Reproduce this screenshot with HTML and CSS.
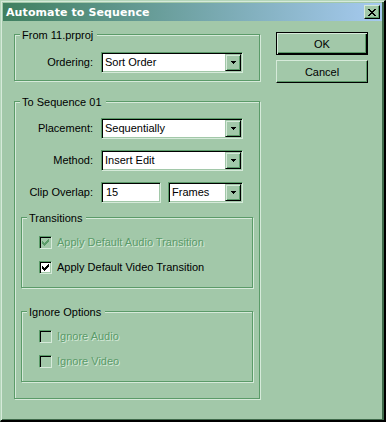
FILE: index.html
```html
<!DOCTYPE html>
<html lang="en">
<head>
  <meta charset="UTF-8" />
  <title>Automate to Sequence</title>
  <link rel="stylesheet" href="styles.css">
</head>
<body>
  <div class="window">
    <!-- заголовок окна -->
    <div class="titlebar">
      <span class="title">Automate to Sequence</span>
      <span class="close-btn">
        <svg width="8" height="7" viewBox="0 0 8 7" shape-rendering="crispEdges">
          <path d="M0 0h2v1h-2z M6 0h2v1h-2z M1 1h2v1h-2z M5 1h2v1h-2z M2 2h4v1h-4z M3 3h2v1h-2z M2 4h4v1h-4z M1 5h2v1h-2z M5 5h2v1h-2z M0 6h2v1h-2z M6 6h2v1h-2z" fill="#000"/>
        </svg>
      </span>
    </div>

    <div class="dialog">
      <div class="main-col">
        <div class="group group-from">
          <span class="group-title">From 11.prproj</span>
          <div class="field-row">
            <span class="field-label">Ordering:</span>
            <div class="combo">
              <span class="combo-text">Sort Order</span>
              <span class="combo-btn"><svg width="5" height="3" viewBox="0 0 5 3" shape-rendering="crispEdges"><path d="M0 0h5v1h-1v1h-1v1h-1v-1h-1v-1h-1z" fill="#000"/></svg></span>
            </div>
          </div>
        </div>

        <div class="group group-seq">
          <span class="group-title">To Sequence 01</span>
          <div class="rows">
            <div class="field-row">
              <span class="field-label">Placement:</span>
              <div class="combo">
                <span class="combo-text">Sequentially</span>
                <span class="combo-btn"><svg width="5" height="3" viewBox="0 0 5 3" shape-rendering="crispEdges"><path d="M0 0h5v1h-1v1h-1v1h-1v-1h-1v-1h-1z" fill="#000"/></svg></span>
              </div>
            </div>
            <div class="field-row">
              <span class="field-label">Method:</span>
              <div class="combo">
                <span class="combo-text">Insert Edit</span>
                <span class="combo-btn"><svg width="5" height="3" viewBox="0 0 5 3" shape-rendering="crispEdges"><path d="M0 0h5v1h-1v1h-1v1h-1v-1h-1v-1h-1z" fill="#000"/></svg></span>
              </div>
            </div>
            <div class="field-row">
              <span class="field-label">Clip Overlap:</span>
              <div class="textbox">15</div>
              <div class="combo combo-small">
                <span class="combo-text">Frames</span>
                <span class="combo-btn"><svg width="5" height="3" viewBox="0 0 5 3" shape-rendering="crispEdges"><path d="M0 0h5v1h-1v1h-1v1h-1v-1h-1v-1h-1z" fill="#000"/></svg></span>
              </div>
            </div>
          </div>

          <div class="group group-inner">
            <span class="group-title">Transitions</span>
            <div class="check-row disabled">
              <span class="checkbox"><svg width="7" height="7" viewBox="0 0 7 7" shape-rendering="crispEdges"><path d="M6 0h1v1h-1z M5 1h2v1h-2z M0 2h1v1h-1z M4 2h3v1h-3z M0 3h2v1h-2z M3 3h3v1h-3z M0 4h5v1h-5z M1 5h3v1h-3z M2 6h1v1h-1z"/></svg></span>
              <span class="check-label">Apply Default Audio Transition</span>
            </div>
            <div class="check-row">
              <span class="checkbox"><svg width="7" height="7" viewBox="0 0 7 7" shape-rendering="crispEdges"><path d="M6 0h1v1h-1z M5 1h2v1h-2z M0 2h1v1h-1z M4 2h3v1h-3z M0 3h2v1h-2z M3 3h3v1h-3z M0 4h5v1h-5z M1 5h3v1h-3z M2 6h1v1h-1z"/></svg></span>
              <span class="check-label">Apply Default Video Transition</span>
            </div>
          </div>

          <div class="group group-inner group-ignore">
            <span class="group-title">Ignore Options</span>
            <div class="check-row disabled">
              <span class="checkbox"></span>
              <span class="check-label">Ignore Audio</span>
            </div>
            <div class="check-row disabled">
              <span class="checkbox"></span>
              <span class="check-label">Ignore Video</span>
            </div>
          </div>
        </div>
      </div>

      <div class="btn-col">
        <button class="btn btn-default">OK</button>
        <button class="btn">Cancel</button>
      </div>
    </div>
  </div>
</body>
</html>
```

FILE: styles.css
```css
:root {
  --face: #a2c8a9;
  --hilight: #d6eada;
  --shadow: #5b9b69;
  --dark: #000;
  --title-a: #3f7f5f;
  --title-b: #a6caf0;
}

body {
  margin: 0;
  padding: 0;
  font-family: "Liberation Sans", Arial, sans-serif;
  font-size: 11px;
  line-height: 13px;
  color: #000;
}

/* окно */
.window {
  box-sizing: border-box;
  width: 386px;
  height: 422px;
  background: var(--face);
  border-top: 1px solid #b4d6ba;
  border-left: 1px solid #b4d6ba;
  border-right: 2px solid var(--dark);
  border-bottom: 2px solid var(--dark);
  box-shadow: inset 1px 1px 0 var(--hilight), inset -2px -1px 0 #3f6a4a;
  padding: 2px 2px 0 2px;
}

.titlebar {
  height: 18px;
  display: flex;
  align-items: center;
  justify-content: space-between;
  padding: 0 2px 0 3px;
  background: linear-gradient(to right, var(--title-a), var(--title-b));
}

.title {
  font-family: "DejaVu Sans", sans-serif;
  font-weight: bold;
  font-size: 11px;
  letter-spacing: 0.1px;
  color: #fff;
}

.close-btn {
  box-sizing: border-box;
  width: 16px;
  height: 14px;
  display: flex;
  align-items: center;
  justify-content: center;
  background: var(--face);
  border-top: 1px solid var(--hilight);
  border-left: 1px solid var(--hilight);
  border-right: 1px solid var(--dark);
  border-bottom: 1px solid var(--dark);
  box-shadow: inset -1px -1px 0 var(--shadow);
}

.close-btn svg {
  margin-left: -1px;
}

.dialog {
  display: flex;
  align-items: flex-start;
  padding: 11px 0 0 11px;
}

.main-col {
  width: 246px;
}

/* рамки групп */
.group {
  position: relative;
  box-sizing: border-box;
  border: 1px solid var(--shadow);
  box-shadow: inset 1px 1px 0 var(--hilight), 1px 1px 0 var(--hilight);
}

.group-title {
  position: absolute;
  top: -6px;
  left: 5px;
  padding: 0 4px 0 2px;
  background: var(--face);
  white-space: nowrap;
}

.group-from {
  margin-top: 2px;
  height: 47px;
  padding-top: 17px;
}

.group-seq {
  margin-top: 20px;
  padding: 16px 0;
}

.rows {
  display: flex;
  flex-direction: column;
  gap: 11px;
}

.field-row {
  display: flex;
  align-items: center;
  height: 21px;
}

.field-label {
  box-sizing: border-box;
  width: 86px;
  padding-right: 8px;
  text-align: right;
}

.combo,
.textbox {
  box-sizing: border-box;
  height: 21px;
  background: #fff;
  border-top: 1px solid var(--shadow);
  border-left: 1px solid var(--shadow);
  border-right: 1px solid var(--hilight);
  border-bottom: 1px solid var(--hilight);
  box-shadow: inset 1px 1px 0 var(--dark), inset -1px -1px 0 var(--face);
  padding: 1px;
  display: flex;
  align-items: center;
}

.combo {
  width: 142px;
}

.combo-small {
  width: 75px;
}

.combo-text {
  flex: 1;
  padding-left: 2px;
  white-space: nowrap;
}

.combo-btn {
  box-sizing: border-box;
  width: 16px;
  height: 17px;
  display: flex;
  align-items: center;
  justify-content: center;
  background: var(--face);
  border-top: 1px solid var(--face);
  border-left: 1px solid var(--face);
  border-right: 1px solid var(--dark);
  border-bottom: 1px solid var(--dark);
  box-shadow: inset 1px 1px 0 var(--hilight), inset -1px -1px 0 var(--shadow);
}

.textbox {
  width: 60px;
  margin-right: 7px;
  padding-left: 4px;
}

.group-inner {
  height: 71px;
  margin: 14px 6px 0;
  padding: 18px 0 0 17px;
  display: flex;
  flex-direction: column;
  gap: 12px;
}

.group-ignore {
  margin-top: 23px;
}

.check-row {
  display: flex;
  align-items: center;
  gap: 5px;
  height: 13px;
}

.checkbox {
  box-sizing: border-box;
  width: 13px;
  height: 13px;
  background: #fff;
  border-top: 1px solid var(--shadow);
  border-left: 1px solid var(--shadow);
  border-right: 1px solid var(--hilight);
  border-bottom: 1px solid var(--hilight);
  box-shadow: inset 1px 1px 0 var(--dark), inset -1px -1px 0 var(--face);
  display: flex;
  align-items: center;
  justify-content: center;
}

.checkbox svg {
  fill: #000;
}

.disabled .checkbox {
  background: var(--face);
}

.disabled .checkbox svg {
  fill: var(--shadow);
}

.disabled .check-label {
  color: var(--shadow);
  text-shadow: 1px 1px 0 var(--hilight);
}

/* кнопки */
.btn-col {
  display: flex;
  flex-direction: column;
  gap: 5px;
  margin-left: 16px;
}

.btn {
  box-sizing: border-box;
  width: 92px;
  height: 23px;
  margin: 0;
  padding: 0;
  font-family: inherit;
  font-size: 11px;
  color: #000;
  background: var(--face);
  border-top: 1px solid var(--hilight);
  border-left: 1px solid var(--hilight);
  border-right: 1px solid var(--dark);
  border-bottom: 1px solid var(--dark);
  box-shadow: inset -1px -1px 0 var(--shadow);
  border-radius: 0;
}

.btn-default {
  border: 1px solid var(--dark);
  box-shadow: inset 1px 1px 0 var(--hilight), inset -1px -1px 0 var(--dark), inset -2px -2px 0 var(--shadow);
}
```
